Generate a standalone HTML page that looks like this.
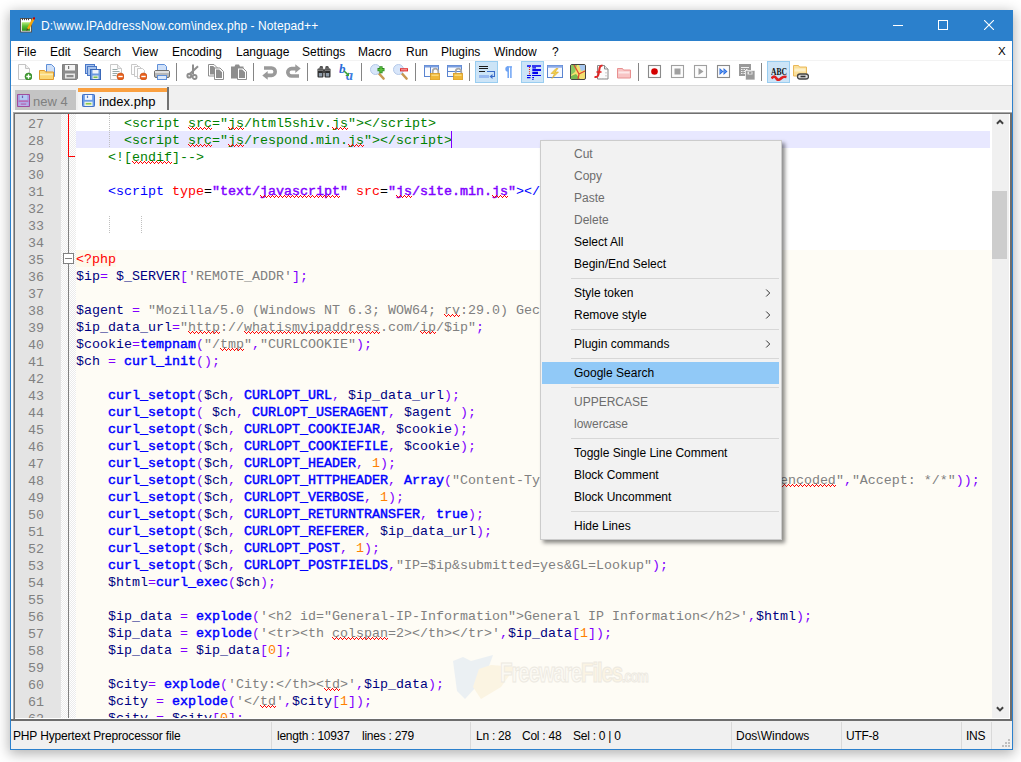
<!DOCTYPE html>
<html lang="en">
<head>
<meta charset="utf-8">
<title>D:\www.IPAddressNow.com\index.php - Notepad++</title>
<style>
*,*:before,*:after{box-sizing:border-box;margin:0;padding:0}
html,body{width:1021px;height:762px;overflow:hidden;background:#fff}
body{position:relative;font-family:"Liberation Sans",sans-serif;font-size:12px;color:#000}
#win{position:absolute;left:10px;top:10px;width:1003px;height:740px;background:#f0f0f0;border:1px solid #2b80cc;box-shadow:0 3px 12px 1px rgba(0,0,0,.30)}
#o{position:absolute;left:-11px;top:-11px;width:1021px;height:762px}
#title{position:absolute;left:11px;top:11px;width:1001px;height:30px;background:#2b80cc;color:#fff}
#appico{position:absolute;left:8px;top:6px;width:16px;height:16px}
#ttext{position:absolute;left:30px;top:0;line-height:30px;font-size:12px;white-space:nowrap;letter-spacing:.090px}
#wmin{position:absolute;left:882px;top:9px}
#wmax{position:absolute;left:927px;top:9px}
#wcls{position:absolute;left:973px;top:9px}
#menubar{position:absolute;left:11px;top:41px;width:1001px;height:20px;background:#fff;border-bottom:1px solid #f3f3f3}
.mi{position:absolute;top:2px;line-height:19px;font-size:12px;white-space:nowrap;margin-left:-11px}
#mx{left:998px;top:1px;font-size:11.500px}
#toolbar{position:absolute;left:0;top:61px;width:1012px;height:25px}
#toolbar:before{content:"";position:absolute;left:11px;top:0;width:1001px;height:25px;background:#fff;border-bottom:1px solid #d9d9d9}
.tbtn{position:absolute;top:0;width:23px;height:22px;padding:3px 0 0 3px}
.tbtn.act{background:#cce4f7;border:1px solid #99cdf0;padding:3px 0 0 3px}
.tbtn svg{display:block}
.tsep{position:absolute;top:2px;width:1px;height:18px;background:#858585}
#tabbar{position:absolute;left:11px;top:86px;width:1001px;height:24px;background:#f0f0f0}
#edtop{position:absolute;left:13px;top:112px;width:999px;height:1px;background:#a8a8a8}
#edleft{position:absolute;left:13px;top:112px;width:1px;height:609px;background:#a8a8a8}
#lstrip{position:absolute;left:11px;top:86px;width:2px;height:633px;background:#fafafa}
#edbot{position:absolute;left:11px;top:719px;width:4px;height:2px;background:#6d6d6d}
#tabstrip{position:absolute;left:11px;top:110px;width:1001px;height:2px;background:#fff}
.tab{position:absolute;white-space:nowrap;font-size:13px}
.tab svg{position:absolute}
.tab span{position:absolute}
#tab1{left:4px;top:4px;width:61px;height:20px;background:#c4c4c4;color:#808080}
#tab1 svg{left:2px;top:4px}
#tab1 span{left:18px;top:2px;line-height:20px}
#tab2{left:67px;top:1px;width:91px;height:24px;background:#f5f5f5;border-right:2px solid #727272;color:#000}
#tab2 .obar{position:absolute;left:0;top:1px;width:89px;height:4px;background:#faa040}
#tab2 svg{left:4px;top:7px}
#tab2 span{left:21px;top:5px;line-height:20px}
#editor{position:absolute;left:13px;top:112px;width:999px;height:609px;background:#fff;border:2px solid #6d6d6d;border-top-color:#717171;border-left-color:#717171;overflow:hidden}
#ed{position:absolute;left:0;top:0;width:994px;height:604px;overflow:hidden;background:#fff}
#lnm{position:absolute;left:0;top:0;width:46px;height:610px;background:#e4e4e4}
.ln{height:17px;line-height:21px;font-family:"Liberation Mono",monospace;font-size:13.330px;color:#808080;text-align:right;padding-right:17px}
#foldm{position:absolute;left:46px;top:0;width:15px;height:610px;background:conic-gradient(#fff 25%,#ebebeb 0 50%,#fff 0 75%,#ebebeb 0) 0 0/2px 2px}
#foldline1{position:absolute;left:7px;top:0;width:1px;height:43px;background:#f00}
#foldtick{position:absolute;left:7px;top:42px;width:7px;height:1px;background:#f00}
#foldbox{position:absolute;left:2px;top:139px;width:11px;height:11px;border:1px solid #808080;background:#fff}
#foldbox i{position:absolute;left:1px;top:4px;width:7px;height:1px;background:#808080}
#foldline0{position:absolute;left:7px;top:43px;width:1px;height:96px;background:#808080}
#foldline2{position:absolute;left:7px;top:150px;width:1px;height:460px;background:#808080}
#phpbg2{position:absolute;left:61px;top:136px;width:916px;height:480px;background:#fefcf5}
#code{position:absolute;left:61px;top:0;width:914px;height:620px}
.cl{height:17px;line-height:19px;white-space:pre;font-family:"Liberation Mono",monospace;font-size:13.330px;color:#000}
.cl.cur{background:#e8e8ff}
.c{color:#008000}.t{color:#0000ff}.a{color:#ff0000}.e{color:#000}.av{color:#8000ff;-webkit-text-stroke:.450px #8000ff}
.ph{color:#ff0000;background:#fef9ea;display:inline-block;height:17px;vertical-align:top}.v{color:#000080}.o{color:#8000ff}.s{color:#808080}.k{color:#0000ff;-webkit-text-stroke:.450px #0000ff}.n{color:#ff8000}.d{color:#000}
.sq{position:relative}
.z{position:absolute;left:0;top:11px;fill:none;stroke:#f00;stroke-width:1px;shape-rendering:crispEdges}
.cl.cur{position:relative}
.caret{position:absolute;left:375px;top:0;width:1px;height:17px;background:#8000ff}
.ig{position:absolute;width:1px;background:repeating-linear-gradient(to bottom,#c0c0c0 0,#c0c0c0 1px,transparent 1px,transparent 2px)}
#wm{position:absolute;left:436px;top:541px;white-space:nowrap;opacity:.700}
#wm svg{position:absolute;left:0;top:0}
#wmt{position:absolute;left:49px;top:3px;font-size:27px;font-weight:bold;color:#fbf9f3;letter-spacing:-1.500px;transform:scaleX(.760);transform-origin:0 0;-webkit-text-stroke:1px #e6e2d9}
#wmt small{font-size:17px}
#wmt b{color:#fbf1dc}
#vsb{position:absolute;left:977px;top:0;width:17px;height:604px;background:#f0f0f0}
#vsb .sa{position:absolute;left:4px}
#thumb{position:absolute;left:0;top:77px;width:15px;height:68px;background:#cdcdcd}
#status{position:absolute;left:0;top:721px;width:1012px;height:28px}
.sc{position:absolute;top:1px;line-height:28px;font-size:12px;white-space:nowrap;letter-spacing:-.250px}
.ss{position:absolute;top:1px;width:1px;height:27px;background:#d9d9d9}
#grip{position:absolute;left:1002px;top:18px}
#ctx{position:absolute;left:540px;top:140px;width:242px;height:400px;background:#f2f2f2;border:1px solid #ccc;box-shadow:3px 3px 4px rgba(0,0,0,.45);padding:2px 2px 2px 1px}
.ci{position:relative;height:22px;line-height:22px;font-size:12px;padding-left:32px;white-space:nowrap;color:#000}
.ci.dis{color:#6d6d6d}
.ci.hl{background:#91c9f7}
.ci .arr{position:absolute;right:8px;top:6px}
.csep{height:7px;position:relative}
.csep:after{content:"";position:absolute;left:29px;right:0;top:3px;height:1px;background:#d7d7d7}

</style>
</head>
<body>
<div id="win"><div id="o">
  <div id="title">
    <div id="appico"><svg class="ic" width="16" height="16" viewBox="0 0 16 16" ><defs><linearGradient id="ag" x1="0" y1="0" x2="0" y2="1"><stop offset="0" stop-color="#b8ec7c"/><stop offset=".45" stop-color="#58c034"/><stop offset="1" stop-color="#2c8c1c"/></linearGradient></defs><rect x="1.500" y="1.500" width="11" height="13.500" fill="#fff" stroke="#555"/><path d="M3.500 1v2.200M5.500 1v2.200M7.500 1v2.200M9.500 1v2.200" stroke="#444"/><rect x="2.800" y="5.200" width="8.400" height="8.600" fill="url(#ag)"/><path d="M14.400 2l-5.400 10" stroke="#f4a60c" stroke-width="2.500"/><path d="M8 11.300l-.700 2.700 2.400-1.600z" fill="#5a4420"/><circle cx="15" cy="1.400" r="1.200" fill="#c00000"/></svg></div>
    <span id="ttext">D:\www.IPAddressNow.com\index.php - Notepad++</span>
    <svg id="wmin" width="10" height="10" viewBox="0 0 10 10"><path d="M0 5.500h10" stroke="#fff" stroke-width="1"/></svg>
    <svg id="wmax" width="10" height="10" viewBox="0 0 10 10"><rect x=".500" y=".500" width="9" height="9" fill="none" stroke="#fff" stroke-width="1"/></svg>
    <svg id="wcls" width="10" height="10" viewBox="0 0 10 10"><path d="M0 0l10 10M10 0l-10 10" stroke="#fff" stroke-width="1.100"/></svg>
  </div>
  <div id="menubar">
<span class="mi" style="left:17px">File</span>
<span class="mi" style="left:50px">Edit</span>
<span class="mi" style="left:83px">Search</span>
<span class="mi" style="left:132px">View</span>
<span class="mi" style="left:172px">Encoding</span>
<span class="mi" style="left:236px">Language</span>
<span class="mi" style="left:302px">Settings</span>
<span class="mi" style="left:358px">Macro</span>
<span class="mi" style="left:406px">Run</span>
<span class="mi" style="left:441px">Plugins</span>
<span class="mi" style="left:494px">Window</span>
<span class="mi" style="left:552px">?</span>
    <span class="mi" id="mx">X</span>
  </div>
  <div id="toolbar">
<div class="tbtn" style="left:13px"><svg class="ic" width="16" height="16" viewBox="0 0 16 16" ><path d="M2.500 .500h7l4 4v11h-11z" fill="#fdfdfd" stroke="#c4c4c4"/><path d="M9.500 .500v4h4" fill="#eee" stroke="#c4c4c4"/><circle cx="12.500" cy="12.500" r="3.500" fill="#3c9c2c" stroke="#2a7a1e" stroke-width=".600"/><path d="M12.500 10.300v4.400M10.300 12.500h4.400" stroke="#fff" stroke-width="1.300"/></svg></div>
<div class="tbtn" style="left:36px"><svg class="ic" width="16" height="16" viewBox="0 0 16 16" ><path d="M7.5 .5h5l3 3v9h-8z" fill="#cfe0f8" stroke="#5f8fd8"/><path d="M.5 6.5h5l1 1.5h8v7.5h-14z" fill="#fbd774" stroke="#e09a2c"/><path d="M1 10.5h13" stroke="#fdebb0" stroke-width="1.5"/></svg></div>
<div class="tbtn" style="left:59px"><svg class="ic" width="16" height="16" viewBox="0 0 16 16" ><path d="M.5 .5h15v14l-1 1h-14z" fill="#8c8c8c" stroke="#808080"/><rect x="3" y="1" width="10" height="5.5" fill="#f4f4f4"/><rect x="6" y="2" width="1.2" height="3" fill="#777"/><rect x="3" y="9.5" width="10" height="5" fill="#e8e8e8"/><rect x="4.5" y="11" width="7" height="2.2" fill="#8c8c8c"/></svg></div>
<div class="tbtn" style="left:82px"><svg class="ic" width="16" height="16" viewBox="0 0 16 16" ><rect x=".5" y=".5" width="9" height="9" fill="#a8c4ec" stroke="#4a78c8"/><rect x="2.5" y="2.5" width="9" height="9" fill="#a8c4ec" stroke="#4a78c8"/><rect x="5.5" y="5.5" width="10" height="10" fill="#6a98e0" stroke="#3a68b8"/><rect x="7.5" y="6" width="6" height="3.5" fill="#f0f4fc"/><rect x="7.5" y="11.5" width="6" height="3.5" fill="#e8f0e0"/><rect x="8.5" y="12.5" width="4" height="1.5" fill="#7cc050"/></svg></div>
<div class="tbtn" style="left:105px"><svg class="ic" width="16" height="16" viewBox="0 0 16 16" ><path d="M2.5 .5h7l4 4v11h-11z" fill="#fdfdfd" stroke="#c8c8c8"/><path d="M9.5 .5v4h4" fill="#eee" stroke="#c8c8c8"/><path d="M4.5 5.5h5M4.5 7.5h7M4.5 9.5h5M4.5 11.5h4" stroke="#9aa" stroke-width="1"/><circle cx="12.500" cy="12.500" r="3.500" fill="#e8601c" stroke="#c04c10" stroke-width=".600"/><path d="M10.300 12.500h4.400" stroke="#fff" stroke-width="1.400"/></svg></div>
<div class="tbtn" style="left:128px"><svg class="ic" width="16" height="16" viewBox="0 0 16 16" ><path d="M.5 .5h5l2 2v8h-7z" fill="#fdfdfd" stroke="#c8c8c8"/><path d="M3.5 2.5h5l2 2v8h-7z" fill="#fdfdfd" stroke="#c8c8c8"/><path d="M6.5 4.5h5l2 2v8h-7z" fill="#fdfdfd" stroke="#c8c8c8"/><circle cx="12.500" cy="12.500" r="3.500" fill="#e8601c" stroke="#c04c10" stroke-width=".600"/><path d="M10.300 12.500h4.400" stroke="#fff" stroke-width="1.400"/></svg></div>
<div class="tbtn" style="left:151px"><svg class="ic" width="16" height="16" viewBox="0 0 16 16" ><path d="M3.5 .5h7l2 2v5h-9z" fill="#cfe0f8" stroke="#5f8fd8"/><rect x=".5" y="6.5" width="15" height="7" rx="1.5" fill="#b8b8b8" stroke="#707070"/><rect x="1" y="7" width="14" height="2" fill="#e0e0e0"/><rect x="3.5" y="11.5" width="9" height="4" fill="#dbe8fa" stroke="#5f8fd8"/></svg></div>
<div class="tsep" style="left:176px"></div>
<div class="tbtn" style="left:182px"><svg class="ic" width="16" height="16" viewBox="0 0 16 16" ><path d="M8 .500v10" stroke="#8e8e8e" stroke-width="2"/><path d="M13 2.300l-9 8.500" stroke="#8e8e8e" stroke-width="2"/><circle cx="4.300" cy="11.700" r="1.900" fill="none" stroke="#8e8e8e" stroke-width="2"/><circle cx="9.600" cy="13" r="2" fill="none" stroke="#8e8e8e" stroke-width="1.800"/></svg></div>
<div class="tbtn" style="left:205px"><svg class="ic" width="16" height="16" viewBox="0 0 16 16" ><path d="M0.5 0.5h5.500l3.500 3.500v8h-9z" fill="#fff" stroke="#8e8e8e"/><path d="M2.0 2.0h3.200l2.800 2.800v5.700h-6z" fill="#8e8e8e"/><path d="M6.5 4h5.500l3.500 3.500v8h-9z" fill="#fff" stroke="#8e8e8e"/><path d="M8.0 5.5h3.200l2.800 2.800v5.700h-6z" fill="#8e8e8e"/></svg></div>
<div class="tbtn" style="left:228px"><svg class="ic" width="16" height="16" viewBox="0 0 16 16" ><path d="M0 2.500h3.500l1-2h3.500l1 2h3.500v12h-12.500z" fill="#8e8e8e"/><path d="M6.5 4h5.500l3.500 3.500v8h-9z" fill="#fff" stroke="#8e8e8e"/><path d="M8.0 5.5h3.200l2.800 2.800v5.700h-6z" fill="#8e8e8e"/></svg></div>
<div class="tsep" style="left:253px"></div>
<div class="tbtn" style="left:259px"><svg class="ic" width="16" height="16" viewBox="0 0 16 16" ><path d="M2 4h7.500a3.700 3.700 0 0 1 0 7.400h-4.500" fill="none" stroke="#9a9a9a" stroke-width="3.600"/><path d="M.300 11.400l5.400-4.400v8.800z" fill="#9a9a9a"/></svg></div>
<div class="tbtn" style="left:282px"><svg class="ic" width="16" height="16" viewBox="0 0 16 16" ><path d="M14 12h-7.500a3.700 3.700 0 0 1 0 -7.400h4.500" fill="none" stroke="#9a9a9a" stroke-width="3.600"/><path d="M15.700 4.600l-5.400-4.400v8.800z" fill="#9a9a9a"/></svg></div>
<div class="tsep" style="left:307px"></div>
<div class="tbtn" style="left:313px"><svg class="ic" width="16" height="16" viewBox="0 0 16 16" ><path d="M3 4.500l1.200-2.500h2.300l.800 2.500zM9 4.500l.800-2.500h2.300l1.200 2.500z" fill="#555"/><rect x="1.500" y="4.500" width="6" height="9" rx="1" fill="#2c2c2c"/><rect x="8.500" y="4.500" width="6" height="9" rx="1" fill="#2c2c2c"/><rect x="6.500" y="5.500" width="3" height="3.500" fill="#444"/><rect x="2.800" y="9" width="3.400" height="3.500" fill="#8c9aa8"/><rect x="9.800" y="9" width="3.400" height="3.500" fill="#8c9aa8"/><rect x="2" y="5.500" width="5" height="1.300" fill="#8a8a8a"/><rect x="9" y="5.500" width="5" height="1.300" fill="#8a8a8a"/></svg></div>
<div class="tbtn" style="left:336px"><svg class="ic" width="16" height="16" viewBox="0 0 16 16" ><text x="0" y="8.500" font-family="Liberation Serif,serif" font-style="italic" font-weight="bold" font-size="13" fill="#2a6cd8">b</text><text x="7" y="16" font-family="Liberation Serif,serif" font-style="italic" font-weight="bold" font-size="14" fill="#3a7ce0">a</text><path d="M5 7l3.500 3.200" stroke="#3aa03a" stroke-width="1.600"/><path d="M10 8.400v3.600h-3.800z" fill="#3aa03a"/></svg></div>
<div class="tsep" style="left:361px"></div>
<div class="tbtn" style="left:367px"><svg class="ic" width="16" height="16" viewBox="0 0 16 16" ><path d="M8.500 9l5 5.500" stroke="#c89850" stroke-width="2.600" stroke-linecap="round"/><circle cx="5.500" cy="5.500" r="5" fill="#d8e6fa" stroke="#b4c8e8"/><path d="M11 2.200v7M7.500 5.700h7" stroke="#2a8a1e" stroke-width="3.200"/><path d="M11 3v5.400M8.300 5.700h5.400" stroke="#5cc040" stroke-width="1.600"/></svg></div>
<div class="tbtn" style="left:390px"><svg class="ic" width="16" height="16" viewBox="0 0 16 16" ><path d="M8.500 9l5 5.500" stroke="#c89850" stroke-width="2.600" stroke-linecap="round"/><circle cx="5.500" cy="5.500" r="5" fill="#d8e6fa" stroke="#b4c8e8"/><rect x="7" y="4.200" width="8" height="3.200" fill="#e03030"/><rect x="8" y="5.200" width="6" height="1.200" fill="#f8a0a0"/></svg></div>
<div class="tsep" style="left:415px"></div>
<div class="tbtn" style="left:421px"><svg class="ic" width="16" height="16" viewBox="0 0 16 16" ><rect x=".500" y="1.500" width="14" height="11" fill="#fafcff" stroke="#5a84d0"/><rect x=".500" y="1.500" width="14" height="2" fill="#7a9ee0"/><path d="M6.500 3v9.500" stroke="#5a84d0"/><path d="M8.700 9.500v-2a2.800 2.800 0 0 1 5.600 0v2" fill="none" stroke="#a8a8a8" stroke-width="1.800"/><rect x="6.500" y="9.500" width="9" height="6.500" fill="#f0b838" stroke="#d89a20" stroke-width=".8"/><rect x="7.500" y="10.500" width="7" height="1.500" fill="#fad878"/></svg></div>
<div class="tbtn" style="left:444px"><svg class="ic" width="16" height="16" viewBox="0 0 16 16" ><rect x=".500" y="1.500" width="14" height="11" fill="#fafcff" stroke="#5a84d0"/><rect x=".500" y="1.500" width="14" height="2" fill="#7a9ee0"/><path d="M.500 7.500h14" stroke="#5a84d0"/><path d="M8.700 9.500v-2a2.800 2.800 0 0 1 5.600 0v2" fill="none" stroke="#a8a8a8" stroke-width="1.800"/><rect x="6.500" y="9.500" width="9" height="6.500" fill="#f0b838" stroke="#d89a20" stroke-width=".8"/><rect x="7.500" y="10.500" width="7" height="1.500" fill="#fad878"/></svg></div>
<div class="tsep" style="left:469px"></div>
<div class="tbtn act" style="left:475px"><svg class="ic" width="16" height="16" viewBox="0 0 16 16" ><path d="M0 1.500h9M0 3.500h9M0 6.500h6" stroke="#1c1c1c" stroke-width="1.200"/><path d="M8 6.500h7.500v5h-3" fill="none" stroke="#3a6cc8" stroke-width="1.100"/><path d="M10.500 11.500l3-2.500v5z" fill="#3a6cc8"/><rect x="0" y="10" width="10" height="3" fill="#98baf0"/></svg></div>
<div class="tbtn" style="left:498px"><svg class="ic" width="16" height="16" viewBox="0 0 16 16" ><path d="M7.200 2.500v11.500M9.900 2.500v11.500" stroke="#6fa4f4" stroke-width="1.500"/><path d="M6 2.900h5" stroke="#6fa4f4" stroke-width="1.300"/><path d="M7 2.300a2.700 2.700 0 0 0 0 5.400z" fill="#6fa4f4"/></svg></div>
<div class="tbtn act" style="left:521px"><svg class="ic" width="16" height="16" viewBox="0 0 16 16" ><g stroke="#0000f0"><path d="M2 1h4M7 1h9" stroke-width="1.500"/><path d="M7.300 2.900h3.700M2 10.500h4M7 10.500h9M2 12.600h3.500M7.300 12.600h1.700M7.300 14.500h1.200" stroke-width="1.200"/><path d="M7.300 5h8.700" stroke-width="1.900"/><path d="M7.300 7.900h5.700" stroke-width="2.300"/></g><path d="M4.500 2v7.500" stroke="#e81818" stroke-width="1.100" stroke-dasharray="1 1.100"/></svg></div>
<div class="tbtn" style="left:544px"><svg class="ic" width="16" height="16" viewBox="0 0 16 16" ><rect x=".500" y="1.500" width="15" height="12" fill="#f6f9ff" stroke="#5a84d0"/><rect x=".500" y="1.500" width="15" height="2.200" fill="#8aaae8"/><path d="M9 4.500l-5 5h3.500l-2.500 5 6.500-6.500h-3.500l3-3.500z" fill="#f0d050" stroke="#d8a828" stroke-width=".6"/></svg></div>
<div class="tbtn" style="left:567px"><svg class="ic" width="16" height="16" viewBox="0 0 16 16" ><rect x=".500" y=".500" width="15" height="15" rx="1.500" fill="#f4e070" stroke="#444"/><path d="M1 1h6l-2 7-4 3z" fill="#8cc860"/><path d="M9 1h6v5l-4 1z" fill="#a8c8f0"/><path d="M1 12l5-2 4 5h-9z" fill="#78b850"/><path d="M4 1l5 9 6-3M9 10l-1 5" stroke="#e04830" stroke-width="1.300" fill="none"/></svg></div>
<div class="tbtn" style="left:590px"><svg class="ic" width="16" height="16" viewBox="0 0 16 16" ><path d="M4.500 1.500h7l3.500 3.500v10h-10.500z" fill="#fcfcfc" stroke="#888"/><path d="M11.500 1.500v3.500h3.500" fill="#e8e8e8" stroke="#888"/><path d="M13 8v6.500h-6" stroke="#bbb" stroke-dasharray="1.500 1.500" fill="none"/><path d="M9.500 1.500c-3 0-3 2.500-3.500 6.500s-1.500 5.500-4.500 5" fill="none" stroke="#e02828" stroke-width="2"/><path d="M3.500 8h5" stroke="#e02828" stroke-width="1.600"/></svg></div>
<div class="tbtn" style="left:613px"><svg class="ic" width="16" height="16" viewBox="0 0 16 16" ><path d="M1.500 4.500h5l1 1.500h7v8h-13z" fill="#f8c4c4" stroke="#e89090"/><path d="M2.500 7.500h11v2h-11z" fill="#fde8e8"/></svg></div>
<div class="tsep" style="left:638px"></div>
<div class="tbtn" style="left:644px"><svg class="ic" width="16" height="16" viewBox="0 0 16 16" ><rect x="1.500" y="1.500" width="12" height="12" fill="#fcfcfc" stroke="#8a8a8a" stroke-width="1.100"/><circle cx="7.500" cy="7.500" r="3.300" fill="#d40000"/></svg></div>
<div class="tbtn" style="left:667px"><svg class="ic" width="16" height="16" viewBox="0 0 16 16" ><rect x="1.500" y="1.500" width="12" height="12" fill="#fcfcfc" stroke="#a0a0a0" stroke-width="1.100"/><rect x="4.500" y="4.500" width="6" height="6" fill="#a0a0a0"/></svg></div>
<div class="tbtn" style="left:690px"><svg class="ic" width="16" height="16" viewBox="0 0 16 16" ><rect x="1.500" y="1.500" width="12" height="12" fill="#fcfcfc" stroke="#a0a0a0" stroke-width="1.100"/><path d="M5.500 4l5 3.500-5 3.500z" fill="#a0a0a0"/></svg></div>
<div class="tbtn" style="left:713px"><svg class="ic" width="16" height="16" viewBox="0 0 16 16" ><rect x="1.500" y="1.500" width="12" height="12" fill="#fcfcfc" stroke="#8a8a8a" stroke-width="1.100"/><path d="M3.500 4l4 3.500-4 3.500zM7.500 4l4 3.500-4 3.500z" fill="#2a6ce0"/><path d="M4.300 6l1.700 1.500-1.700 1.500zM8.300 6l1.700 1.500-1.700 1.500z" fill="#6aa4f4"/></svg></div>
<div class="tbtn" style="left:736px"><svg class="ic" width="16" height="16" viewBox="0 0 16 16" ><rect x="0" y="0" width="12" height="12" fill="#9a9a9a"/><path d="M2 3.500h8M2 5.500h1.500M4.500 5.500h1.500M7 5.500h1.500M2 7.500h1.500M4.500 7.500h1.500M2 9.500h1.500M4.500 9.500h1.500" stroke="#f0f0f0" stroke-width="1.200"/><rect x="6.500" y="6.500" width="9.500" height="9.500" fill="#9a9a9a" stroke="#f4f4f4" stroke-width=".8"/><rect x="8.500" y="7.500" width="5" height="3" fill="#e8e8e8"/><rect x="10" y="8" width="2.500" height="1.800" fill="#9a9a9a"/></svg></div>
<div class="tsep" style="left:761px"></div>
<div class="tbtn act" style="left:767px"><svg class="ic" width="16" height="16" viewBox="0 0 16 16" ><text x="8" y="9.500" text-anchor="middle" font-family="Liberation Serif,serif" font-weight="bold" font-size="11" fill="#111" textLength="16" lengthAdjust="spacingAndGlyphs">ABC</text><path d="M.500 13.500c2-2.500 3.500-2.500 5 0s3.500 1 5-.500 3-1.500 5-1" fill="none" stroke="#e02020" stroke-width="2.600"/></svg></div>
<div class="tbtn" style="left:790px"><svg class="ic" width="16" height="16" viewBox="0 0 16 16" ><path d="M.500 1.500h5l1 1.500h7v9h-13z" fill="#fbe09a" stroke="#eab858"/><path d="M1.500 4.500h11v3h-11z" fill="#fdf0c8"/><rect x="4.500" y="10" width="11" height="5" rx="2.500" fill="#dcdcdc" stroke="#444" stroke-width="1.300"/><path d="M7.500 12.500h5" stroke="#333" stroke-width="1.600"/></svg></div>
  </div>
  <div id="tabbar">
    <div class="tab inactive" id="tab1"><svg class="ic" width="13" height="13" viewBox="0 0 16 16" ><rect x=".600" y=".600" width="14.800" height="14.800" rx="1" fill="#a8a4e4" stroke="#a04c9c" stroke-width="1.300"/><rect x="3.500" y="1.200" width="9" height="6" fill="#b4ccf4"/><rect x="6" y="2" width="1.500" height="3" fill="#7060b0"/><rect x="2" y="8" width="12" height="1.600" fill="#c060a8"/><rect x="3" y="10.500" width="10" height="4.300" fill="#b8b4ec"/><rect x="4.500" y="11.500" width="7" height="1.800" fill="#b070b8"/></svg><span>new 4</span></div>
    <div class="tab active" id="tab2"><div class="obar"></div><svg class="ic" width="13" height="13" viewBox="0 0 16 16" ><rect x=".600" y=".600" width="14.800" height="14.800" rx="1" fill="#6a9ce8" stroke="#3c6cc4" stroke-width="1.200"/><rect x="3.500" y="1.200" width="9" height="6" fill="#f2f7ff"/><rect x="6" y="2" width="1.500" height="3" fill="#5a80c8"/><rect x="3" y="9.500" width="10" height="5.300" fill="#eef4e4"/><rect x="4.500" y="11" width="7" height="2" fill="#8cc84c"/></svg><span>index.php</span></div>
  </div>
  <div id="tabstrip"></div>
  <div id="editor"><div id="ed">
    <div id="lnm">
<div class="ln">27</div>
<div class="ln">28</div>
<div class="ln">29</div>
<div class="ln">30</div>
<div class="ln">31</div>
<div class="ln">32</div>
<div class="ln">33</div>
<div class="ln">34</div>
<div class="ln">35</div>
<div class="ln">36</div>
<div class="ln">37</div>
<div class="ln">38</div>
<div class="ln">39</div>
<div class="ln">40</div>
<div class="ln">41</div>
<div class="ln">42</div>
<div class="ln">43</div>
<div class="ln">44</div>
<div class="ln">45</div>
<div class="ln">46</div>
<div class="ln">47</div>
<div class="ln">48</div>
<div class="ln">49</div>
<div class="ln">50</div>
<div class="ln">51</div>
<div class="ln">52</div>
<div class="ln">53</div>
<div class="ln">54</div>
<div class="ln">55</div>
<div class="ln">56</div>
<div class="ln">57</div>
<div class="ln">58</div>
<div class="ln">59</div>
<div class="ln">60</div>
<div class="ln">61</div>
<div class="ln">62</div>
    </div>
    <div id="foldm">
      <div id="foldline0"></div><div id="foldline1"></div><div id="foldtick"></div>
      <div id="foldbox"><i></i></div><div id="foldline2"></div>
    </div>
    <div id="phpbg2"></div>
    <div id="code">
<div class="cl">      <span class="c">&lt;script </span><span class="c sq">src<svg class="z" width="24" height="3" viewBox="0 0 24 3"><path d="M.500 .500l2 2l2 -2l2 2l2 -2l2 2l2 -2l2 2l2 -2l2 2l2 -2l2 2l2 -2"/></svg></span><span class="c">="</span><span class="c sq">js<svg class="z" width="16" height="3" viewBox="0 0 16 3"><path d="M.500 .500l2 2l2 -2l2 2l2 -2l2 2l2 -2l2 2l2 -2"/></svg></span><span class="c">/html5shiv.</span><span class="c sq">js<svg class="z" width="16" height="3" viewBox="0 0 16 3"><path d="M.500 .500l2 2l2 -2l2 2l2 -2l2 2l2 -2l2 2l2 -2"/></svg></span><span class="c">"&gt;&lt;/script&gt;</span></div>
<div class="cl cur">      <span class="c">&lt;script </span><span class="c sq">src<svg class="z" width="24" height="3" viewBox="0 0 24 3"><path d="M.500 .500l2 2l2 -2l2 2l2 -2l2 2l2 -2l2 2l2 -2l2 2l2 -2l2 2l2 -2"/></svg></span><span class="c">="</span><span class="c sq">js<svg class="z" width="16" height="3" viewBox="0 0 16 3"><path d="M.500 .500l2 2l2 -2l2 2l2 -2l2 2l2 -2l2 2l2 -2"/></svg></span><span class="c">/respond.min.</span><span class="c sq">js<svg class="z" width="16" height="3" viewBox="0 0 16 3"><path d="M.500 .500l2 2l2 -2l2 2l2 -2l2 2l2 -2l2 2l2 -2"/></svg></span><span class="c">"&gt;&lt;/script&gt;</span><span class="caret"></span></div>
<div class="cl">    <span class="c">&lt;![</span><span class="c sq">endif<svg class="z" width="40" height="3" viewBox="0 0 40 3"><path d="M.500 .500l2 2l2 -2l2 2l2 -2l2 2l2 -2l2 2l2 -2l2 2l2 -2l2 2l2 -2l2 2l2 -2l2 2l2 -2l2 2l2 -2l2 2l2 -2"/></svg></span><span class="c">]--&gt;</span></div>
<div class="cl"></div>
<div class="cl">    <span class="t">&lt;script</span> <span class="a">type</span><span class="e">=</span><span class="av">"text/</span><span class="av sq">javascript<svg class="z" width="80" height="3" viewBox="0 0 80 3"><path d="M.500 .500l2 2l2 -2l2 2l2 -2l2 2l2 -2l2 2l2 -2l2 2l2 -2l2 2l2 -2l2 2l2 -2l2 2l2 -2l2 2l2 -2l2 2l2 -2l2 2l2 -2l2 2l2 -2l2 2l2 -2l2 2l2 -2l2 2l2 -2l2 2l2 -2l2 2l2 -2l2 2l2 -2l2 2l2 -2l2 2l2 -2"/></svg></span><span class="av">"</span> <span class="a">src</span><span class="e">=</span><span class="av">"</span><span class="av sq">js<svg class="z" width="16" height="3" viewBox="0 0 16 3"><path d="M.500 .500l2 2l2 -2l2 2l2 -2l2 2l2 -2l2 2l2 -2"/></svg></span><span class="av">/site.min.</span><span class="av sq">js<svg class="z" width="16" height="3" viewBox="0 0 16 3"><path d="M.500 .500l2 2l2 -2l2 2l2 -2l2 2l2 -2l2 2l2 -2"/></svg></span><span class="av">"</span><span class="t">&gt;&lt;/script&gt;</span></div>
<div class="cl"></div>
<div class="cl"></div>
<div class="cl"></div>
<div class="cl"><span class="ph">&lt;?php</span></div>
<div class="cl"><span class="v">$ip</span><span class="o">=</span> <span class="v">$_SERVER</span><span class="o">[</span><span class="s">'REMOTE_ADDR'</span><span class="o">]</span><span class="o">;</span></div>
<div class="cl"></div>
<div class="cl"><span class="v">$agent</span> <span class="o">=</span> <span class="s">"Mozilla/5.0 (Windows NT 6.3; WOW64; </span><span class="s sq">rv<svg class="z" width="16" height="3" viewBox="0 0 16 3"><path d="M.500 .500l2 2l2 -2l2 2l2 -2l2 2l2 -2l2 2l2 -2"/></svg></span><span class="s">:29.0) Gecko/20100101 Firefox/29.0"</span><span class="o">;</span></div>
<div class="cl"><span class="v">$ip_data_url</span><span class="o">=</span><span class="s">"</span><span class="s sq">http<svg class="z" width="32" height="3" viewBox="0 0 32 3"><path d="M.500 .500l2 2l2 -2l2 2l2 -2l2 2l2 -2l2 2l2 -2l2 2l2 -2l2 2l2 -2l2 2l2 -2l2 2l2 -2"/></svg></span><span class="s">://</span><span class="s sq">whatismyipaddress<svg class="z" width="136" height="3" viewBox="0 0 136 3"><path d="M.500 .500l2 2l2 -2l2 2l2 -2l2 2l2 -2l2 2l2 -2l2 2l2 -2l2 2l2 -2l2 2l2 -2l2 2l2 -2l2 2l2 -2l2 2l2 -2l2 2l2 -2l2 2l2 -2l2 2l2 -2l2 2l2 -2l2 2l2 -2l2 2l2 -2l2 2l2 -2l2 2l2 -2l2 2l2 -2l2 2l2 -2l2 2l2 -2l2 2l2 -2l2 2l2 -2l2 2l2 -2l2 2l2 -2l2 2l2 -2l2 2l2 -2l2 2l2 -2l2 2l2 -2l2 2l2 -2l2 2l2 -2l2 2l2 -2l2 2l2 -2l2 2l2 -2"/></svg></span><span class="s">.com/</span><span class="s sq">ip<svg class="z" width="16" height="3" viewBox="0 0 16 3"><path d="M.500 .500l2 2l2 -2l2 2l2 -2l2 2l2 -2l2 2l2 -2"/></svg></span><span class="s">/$ip"</span><span class="o">;</span></div>
<div class="cl"><span class="v">$cookie</span><span class="o">=</span><span class="k">tempnam</span><span class="o">(</span><span class="s">"/</span><span class="s sq">tmp<svg class="z" width="24" height="3" viewBox="0 0 24 3"><path d="M.500 .500l2 2l2 -2l2 2l2 -2l2 2l2 -2l2 2l2 -2l2 2l2 -2l2 2l2 -2"/></svg></span><span class="s">"</span><span class="o">,</span><span class="s">"CURLCOOKIE"</span><span class="o">)</span><span class="o">;</span></div>
<div class="cl"><span class="v">$ch</span> <span class="o">=</span> <span class="k">curl_init</span><span class="o">(</span><span class="o">)</span><span class="o">;</span></div>
<div class="cl"></div>
<div class="cl">    <span class="k">curl_setopt</span><span class="o">(</span><span class="v">$ch</span><span class="o">,</span> <span class="k">CURLOPT_URL</span><span class="o">,</span> <span class="v">$ip_data_url</span><span class="o">)</span><span class="o">;</span></div>
<div class="cl">    <span class="k">curl_setopt</span><span class="o">(</span> <span class="v">$ch</span><span class="o">,</span> <span class="k">CURLOPT_USERAGENT</span><span class="o">,</span> <span class="v">$agent</span> <span class="o">)</span><span class="o">;</span></div>
<div class="cl">    <span class="k">curl_setopt</span><span class="o">(</span><span class="v">$ch</span><span class="o">,</span> <span class="k">CURLOPT_COOKIEJAR</span><span class="o">,</span> <span class="v">$cookie</span><span class="o">)</span><span class="o">;</span></div>
<div class="cl">    <span class="k">curl_setopt</span><span class="o">(</span><span class="v">$ch</span><span class="o">,</span> <span class="k">CURLOPT_COOKIEFILE</span><span class="o">,</span> <span class="v">$cookie</span><span class="o">)</span><span class="o">;</span></div>
<div class="cl">    <span class="k">curl_setopt</span><span class="o">(</span><span class="v">$ch</span><span class="o">,</span> <span class="k">CURLOPT_HEADER</span><span class="o">,</span> <span class="n">1</span><span class="o">)</span><span class="o">;</span></div>
<div class="cl">    <span class="k">curl_setopt</span><span class="o">(</span><span class="v">$ch</span><span class="o">,</span> <span class="k">CURLOPT_HTTPHEADER</span><span class="o">,</span> <span class="k">Array</span><span class="o">(</span><span class="s">"Content-Type: application/x-www-form-</span><span class="s sq">urlencoded<svg class="z" width="80" height="3" viewBox="0 0 80 3"><path d="M.500 .500l2 2l2 -2l2 2l2 -2l2 2l2 -2l2 2l2 -2l2 2l2 -2l2 2l2 -2l2 2l2 -2l2 2l2 -2l2 2l2 -2l2 2l2 -2l2 2l2 -2l2 2l2 -2l2 2l2 -2l2 2l2 -2l2 2l2 -2l2 2l2 -2l2 2l2 -2l2 2l2 -2l2 2l2 -2l2 2l2 -2"/></svg></span><span class="s">"</span><span class="o">,</span><span class="s">"Accept: */*"</span><span class="o">)</span><span class="o">)</span><span class="o">;</span></div>
<div class="cl">    <span class="k">curl_setopt</span><span class="o">(</span><span class="v">$ch</span><span class="o">,</span> <span class="k">CURLOPT_VERBOSE</span><span class="o">,</span> <span class="n">1</span><span class="o">)</span><span class="o">;</span></div>
<div class="cl">    <span class="k">curl_setopt</span><span class="o">(</span><span class="v">$ch</span><span class="o">,</span> <span class="k">CURLOPT_RETURNTRANSFER</span><span class="o">,</span> <span class="k">true</span><span class="o">)</span><span class="o">;</span></div>
<div class="cl">    <span class="k">curl_setopt</span><span class="o">(</span><span class="v">$ch</span><span class="o">,</span> <span class="k">CURLOPT_REFERER</span><span class="o">,</span> <span class="v">$ip_data_url</span><span class="o">)</span><span class="o">;</span></div>
<div class="cl">    <span class="k">curl_setopt</span><span class="o">(</span><span class="v">$ch</span><span class="o">,</span> <span class="k">CURLOPT_POST</span><span class="o">,</span> <span class="n">1</span><span class="o">)</span><span class="o">;</span></div>
<div class="cl">    <span class="k">curl_setopt</span><span class="o">(</span><span class="v">$ch</span><span class="o">,</span> <span class="k">CURLOPT_POSTFIELDS</span><span class="o">,</span><span class="s">"IP=$ip&amp;submitted=yes&amp;GL=Lookup"</span><span class="o">)</span><span class="o">;</span></div>
<div class="cl">    <span class="v">$html</span><span class="o">=</span><span class="k">curl_exec</span><span class="o">(</span><span class="v">$ch</span><span class="o">)</span><span class="o">;</span></div>
<div class="cl"></div>
<div class="cl">    <span class="v">$ip_data</span> <span class="o">=</span> <span class="k">explode</span><span class="o">(</span><span class="s">'&lt;h2 id="General-IP-Information"&gt;General IP Information&lt;/h2&gt;'</span><span class="o">,</span><span class="v">$html</span><span class="o">)</span><span class="o">;</span></div>
<div class="cl">    <span class="v">$ip_data</span> <span class="o">=</span> <span class="k">explode</span><span class="o">(</span><span class="s">'&lt;tr&gt;&lt;th </span><span class="s sq">colspan<svg class="z" width="56" height="3" viewBox="0 0 56 3"><path d="M.500 .500l2 2l2 -2l2 2l2 -2l2 2l2 -2l2 2l2 -2l2 2l2 -2l2 2l2 -2l2 2l2 -2l2 2l2 -2l2 2l2 -2l2 2l2 -2l2 2l2 -2l2 2l2 -2l2 2l2 -2l2 2l2 -2"/></svg></span><span class="s">=2&gt;&lt;/th&gt;&lt;/tr&gt;'</span><span class="o">,</span><span class="v">$ip_data</span><span class="o">[</span><span class="n">1</span><span class="o">]</span><span class="o">)</span><span class="o">;</span></div>
<div class="cl">    <span class="v">$ip_data</span> <span class="o">=</span> <span class="v">$ip_data</span><span class="o">[</span><span class="n">0</span><span class="o">]</span><span class="o">;</span></div>
<div class="cl"></div>
<div class="cl">    <span class="v">$city</span><span class="o">=</span> <span class="k">explode</span><span class="o">(</span><span class="s">'City:&lt;/th&gt;&lt;</span><span class="s sq">td<svg class="z" width="16" height="3" viewBox="0 0 16 3"><path d="M.500 .500l2 2l2 -2l2 2l2 -2l2 2l2 -2l2 2l2 -2"/></svg></span><span class="s">&gt;'</span><span class="o">,</span><span class="v">$ip_data</span><span class="o">)</span><span class="o">;</span></div>
<div class="cl">    <span class="v">$city</span> <span class="o">=</span> <span class="k">explode</span><span class="o">(</span><span class="s">'&lt;/</span><span class="s sq">td<svg class="z" width="16" height="3" viewBox="0 0 16 3"><path d="M.500 .500l2 2l2 -2l2 2l2 -2l2 2l2 -2l2 2l2 -2"/></svg></span><span class="s">'</span><span class="o">,</span><span class="v">$city</span><span class="o">[</span><span class="n">1</span><span class="o">]</span><span class="o">)</span><span class="o">;</span></div>
<div class="cl">    <span class="v">$city</span> <span class="o">=</span> <span class="v">$city</span><span class="o">[</span><span class="n">0</span><span class="o">]</span><span class="o">;</span></div>
    </div>
    <div class="ig" style="left:94px;top:0;height:34px"></div>
    <div class="ig" style="left:94px;top:102px;height:17px"></div>
    <div class="ig" style="left:126px;top:102px;height:17px"></div>
    <div id="wm"><svg width="66" height="46" viewBox="0 0 66 46"><path d="M2 6l10-4 8 4 22-6-8 22-20 22-8-8z" fill="#e4ecf3"/><path d="M28 14l12-4 24 2-14 20-20 12-8-12z" fill="#fbf1da"/></svg><span id="wmt">Freeware<b>Files</b><small>.com</small></span></div>
    <div id="vsb"><svg class="sa" style="top:5px" width="8" height="6" viewBox="0 0 8 6"><path d="M.900 4.700l3.100-3.100 3.100 3.100" fill="none" stroke="#404040" stroke-width="2"/></svg><div id="thumb"></div><svg class="sa" style="bottom:6px" width="8" height="6" viewBox="0 0 8 6"><path d="M.900 1.300l3.100 3.100 3.100-3.100" fill="none" stroke="#404040" stroke-width="2"/></svg></div>
  </div></div>
  <div id="edtop"></div><div id="edleft"></div><div id="lstrip"></div><div id="edbot"></div>
  <div id="status">
    <span class="sc" style="left:13px;letter-spacing:-.160px">PHP Hypertext Preprocessor file</span>
    <i class="ss" style="left:271px"></i><span class="sc" style="left:277px">length : 10937</span><span class="sc" style="left:362px">lines : 279</span>
    <i class="ss" style="left:470px"></i><span class="sc" style="left:476px">Ln : 28</span><span class="sc" style="left:522px">Col : 48</span><span class="sc" style="left:573px">Sel : 0 | 0</span>
    <i class="ss" style="left:731px"></i><span class="sc" style="left:736px;letter-spacing:0">Dos\Windows</span>
    <i class="ss" style="left:841px"></i><span class="sc" style="left:846px">UTF-8</span>
    <i class="ss" style="left:961px"></i><span class="sc" style="left:966px">INS</span>
    <i class="ss" style="left:991px"></i>
    <svg id="grip" width="9" height="9" viewBox="0 0 9 9"><g fill="#bfbfbf"><rect x="6" y="0" width="2" height="2"/><rect x="6" y="3" width="2" height="2"/><rect x="3" y="3" width="2" height="2"/><rect x="6" y="6" width="2" height="2"/><rect x="3" y="6" width="2" height="2"/><rect x="0" y="6" width="2" height="2"/></g></svg>
  </div>
  <div id="ctx">
<div class="ci dis"><span>Cut</span></div>
<div class="ci dis"><span>Copy</span></div>
<div class="ci dis"><span>Paste</span></div>
<div class="ci dis"><span>Delete</span></div>
<div class="ci"><span>Select All</span></div>
<div class="ci"><span>Begin/End Select</span></div>
<div class="csep"></div>
<div class="ci"><span>Style token</span><svg class="arr" width="6" height="10" viewBox="0 0 6 10"><path d="M1.200 1.500l3.500 3.500-3.500 3.500" fill="none" stroke="#333" stroke-width="1"/></svg></div>
<div class="ci"><span>Remove style</span><svg class="arr" width="6" height="10" viewBox="0 0 6 10"><path d="M1.200 1.500l3.500 3.500-3.500 3.500" fill="none" stroke="#333" stroke-width="1"/></svg></div>
<div class="csep"></div>
<div class="ci"><span>Plugin commands</span><svg class="arr" width="6" height="10" viewBox="0 0 6 10"><path d="M1.200 1.500l3.500 3.500-3.500 3.500" fill="none" stroke="#333" stroke-width="1"/></svg></div>
<div class="csep"></div>
<div class="ci hl"><span>Google Search</span></div>
<div class="csep"></div>
<div class="ci dis"><span>UPPERCASE</span></div>
<div class="ci dis"><span>lowercase</span></div>
<div class="csep"></div>
<div class="ci"><span>Toggle Single Line Comment</span></div>
<div class="ci"><span>Block Comment</span></div>
<div class="ci"><span>Block Uncomment</span></div>
<div class="csep"></div>
<div class="ci"><span>Hide Lines</span></div>
  </div>
</div></div>
</body>
</html>
